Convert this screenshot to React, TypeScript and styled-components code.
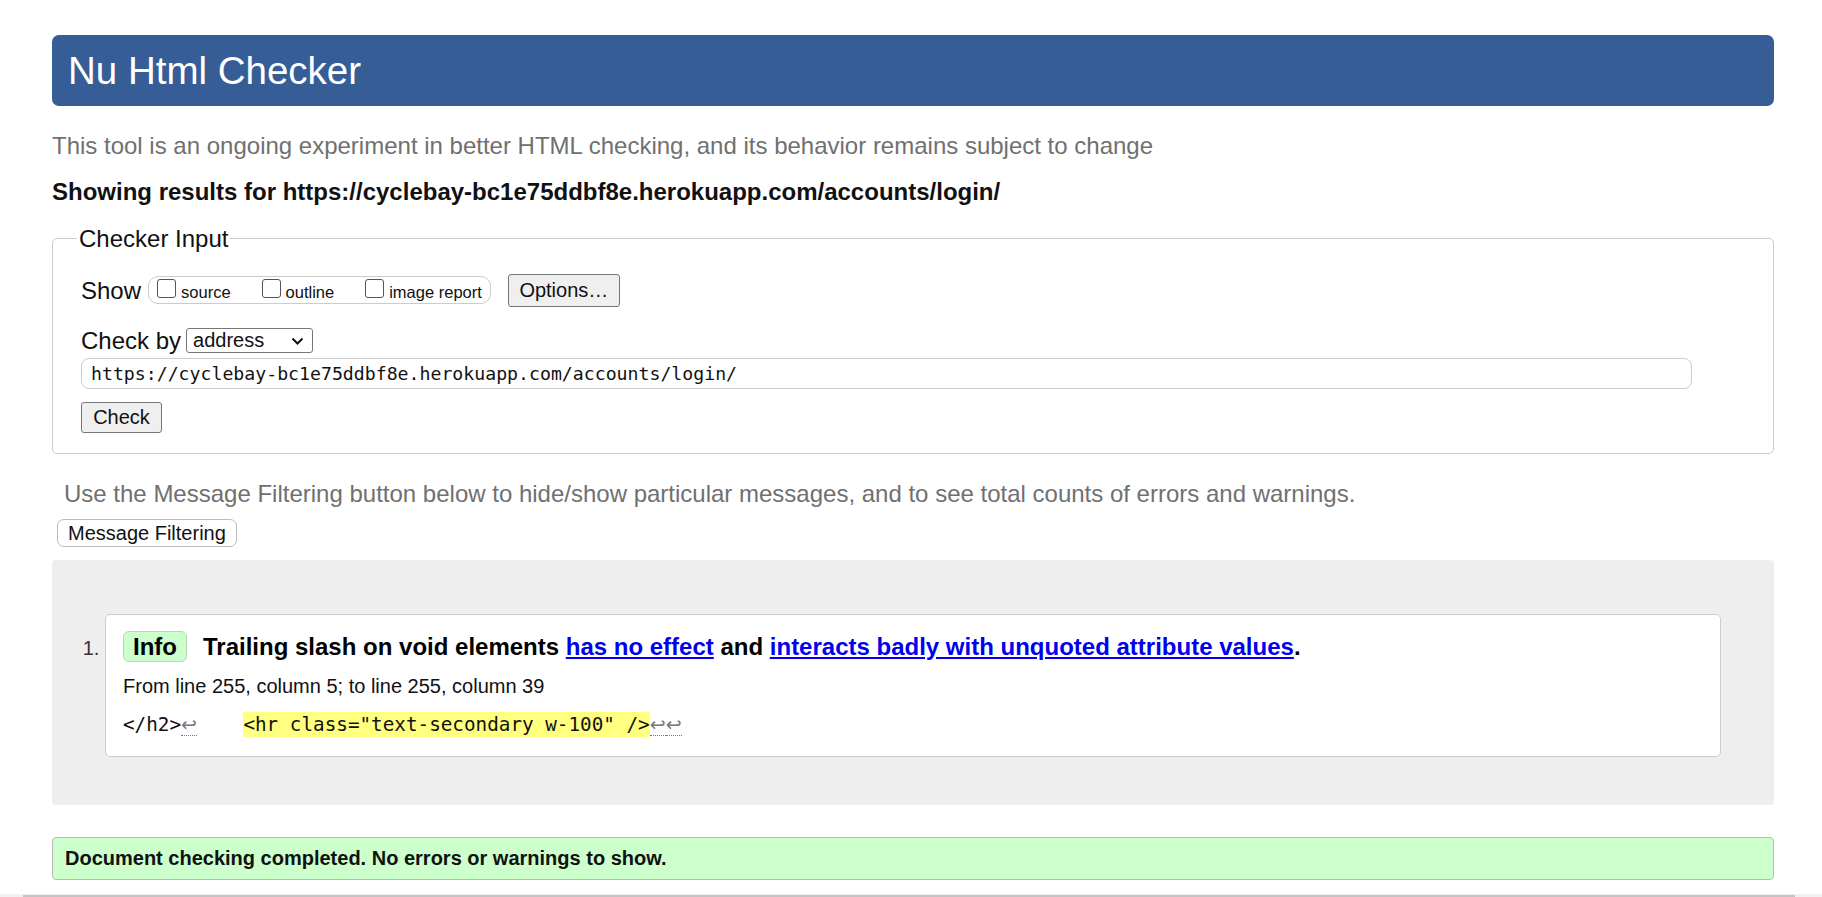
import React from 'react'
import styled, { createGlobalStyle } from 'styled-components'

const GlobalStyle = createGlobalStyle`
  html, body {
    margin: 0;
    padding: 0;
    overflow: hidden;
    background: #fff;
  }
  body {
    font-family: "Liberation Sans", Arial, sans-serif;
    color: #111;
  }
`

const checkedUrl = 'https://cyclebay-bc1e75ddbf8e.herokuapp.com/accounts/login/'

export default function App() {
  return (
    <>
      <GlobalStyle />
      <Page>
        <Header>Nu Html Checker</Header>
        <Intro>This tool is an ongoing experiment in better HTML checking, and its behavior remains subject to change</Intro>
        <ResultsFor>Showing results for {checkedUrl}</ResultsFor>

        <InputForm>
          <Legend>Checker Input</Legend>
          <ShowRow>
            <FieldLabel>Show</FieldLabel>
            <Pill>
              <CheckItem><Box /><CheckText>source</CheckText></CheckItem>
              <CheckItem><Box /><CheckText>outline</CheckText></CheckItem>
              <CheckItem><Box /><CheckText>image report</CheckText></CheckItem>
            </Pill>
            <Button $ml={17} $w={112} $h={33}>Options…</Button>
          </ShowRow>
          <CheckByRow>
            <FieldLabel>Check by</FieldLabel>
            <Select>
              <span>address</span>
              <svg width="13" height="8" viewBox="0 0 13 8">
                <path d="M1.5 1.5 L6.5 6.5 L11.5 1.5" fill="none" stroke="#111" strokeWidth="2" />
              </svg>
            </Select>
          </CheckByRow>
          <UrlInput>{checkedUrl}</UrlInput>
          <Button $mt={13} $w={81} $h={31}>Check</Button>
        </InputForm>

        <FilterHint>Use the Message Filtering button below to hide/show particular messages, and to see total counts of errors and warnings.</FilterHint>
        <FilterButton>Message Filtering</FilterButton>

        <Results>
          <MessageList>
            <Message>
              <MessageHead>
                <Badge>Info</Badge>
                <strong>
                  Trailing slash on void elements <Link>has no effect</Link> and{' '}
                  <Link>interacts badly with unquoted attribute values</Link>.
                </strong>
              </MessageHead>
              <Location>From line 255, column 5; to line 255, column 39</Location>
              <Extract>
                {'</h2>'}<Lf>↩</Lf>{'    '}<Mark>{'<hr class="text-secondary w-100" />'}</Mark><Lf>↩</Lf><Lf>↩</Lf>
              </Extract>
            </Message>
          </MessageList>
        </Results>

        <Done>Document checking completed. No errors or warnings to show.</Done>
      </Page>
      <ScrollTrack><ScrollThumb /></ScrollTrack>
    </>
  )
}

const Page = styled.div`
  width: 1722px;
  margin-left: 52px;
  padding-top: 35px;
`

const Header = styled.h1`
  margin: 0;
  height: 71px;
  padding: 0 16px;
  background: #365d95;
  color: #fff;
  font-size: 38.5px;
  font-weight: normal;
  line-height: 71px;
  border-radius: 7px;
`

const Intro = styled.p`
  margin: 26px 0 0;
  font-size: 24px;
  line-height: 27px;
  color: #707070;
`

const ResultsFor = styled.p`
  margin: 19px 0 0;
  font-size: 24px;
  line-height: 27px;
  font-weight: bold;
  color: #111;
`

const InputForm = styled.fieldset`
  margin: 20px 0 0;
  padding: 0 28px 20px;
  min-inline-size: 0;
  border: 1px solid #ccc;
  border-radius: 5px;
  display: flex;
  flex-direction: column;
  align-items: flex-start;
`

const Legend = styled.legend`
  margin-left: -4px;
  padding: 0 2px;
  font-size: 24px;
  line-height: 27px;
  color: #111;
`

const ShowRow = styled.div`
  display: flex;
  align-items: center;
  height: 34px;
  margin-top: 21px;
`

const CheckByRow = styled.div`
  display: flex;
  align-items: center;
  height: 27px;
  margin-top: 20px;
`

const FieldLabel = styled.span`
  font-size: 24px;
  line-height: 27px;
  color: #111;
`

const Pill = styled.div`
  display: flex;
  gap: 31px;
  height: 26px;
  margin-left: 7px;
  padding: 0 8px;
  border: 1px solid #ccc;
  border-radius: 10px;
`

const CheckItem = styled.label`
  display: flex;
  align-items: flex-start;
  gap: 5px;
`

const Box = styled.span`
  box-sizing: border-box;
  width: 19px;
  height: 19px;
  margin-top: 2px;
  border: 1px solid #555;
  border-radius: 3px;
  background: #fff;
`

const CheckText = styled.span`
  margin-top: 6px;
  font-size: 16.5px;
  line-height: 19px;
  color: #111;
`

const Button = styled.button<{ $ml?: number; $mt?: number; $w: number; $h: number }>`
  box-sizing: border-box;
  width: ${p => p.$w}px;
  height: ${p => p.$h}px;
  margin: ${p => p.$mt || 0}px 0 0 ${p => p.$ml || 0}px;
  padding: 0;
  background: #efefef;
  border: 1px solid #767676;
  border-radius: 3px;
  font-family: "Liberation Sans", Arial, sans-serif;
  font-size: 20px;
  color: #111;
`

const Select = styled.div`
  box-sizing: border-box;
  display: flex;
  align-items: center;
  justify-content: space-between;
  width: 127px;
  height: 25px;
  margin-left: 5px;
  padding: 0 8px 0 6px;
  border: 1px solid #767676;
  border-radius: 3px;
  font-size: 20px;
  color: #111;
`

const UrlInput = styled.div`
  box-sizing: border-box;
  width: 1611px;
  height: 31px;
  margin-top: 4px;
  padding-left: 9px;
  border: 1px solid #ccc;
  border-radius: 8px;
  font-family: "DejaVu Sans Mono", "Liberation Mono", monospace;
  font-size: 18.2px;
  line-height: 29px;
  color: #111;
`

const FilterHint = styled.p`
  margin: 26px 0 0;
  padding-left: 12px;
  font-size: 24px;
  line-height: 27px;
  color: #707070;
`

const FilterButton = styled.button`
  box-sizing: border-box;
  height: 28px;
  margin: 12px 0 0 5px;
  padding: 0 10px;
  background: #fff;
  border: 1px solid #bbb;
  border-radius: 7px;
  font-family: "Liberation Sans", Arial, sans-serif;
  font-size: 20px;
  color: #111;
`

const Results = styled.div`
  margin-top: 13px;
  padding: 54px 53px 48px;
  background: #eee;
  border-radius: 4px;
`

const MessageList = styled.ol`
  margin: 0;
  padding: 0;
  list-style: decimal outside;
`

const Message = styled.li`
  padding: 16px 17px 19px;
  background: #fff;
  border: 1px solid #ccc;
  border-radius: 5px;
  font-size: 20px;
  color: #222;

  &::marker {
    font-size: 20px;
    color: #333;
  }
`

const MessageHead = styled.p`
  margin: 0;
  font-size: 24px;
  line-height: 31px;
  color: #000;
`

const Badge = styled.span`
  display: inline-block;
  box-sizing: border-box;
  height: 31px;
  margin-right: 16px;
  padding: 0 9px;
  background: #cfc;
  border: 1px solid #b4d9b4;
  border-radius: 6px;
  font-weight: bold;
  line-height: 29px;
  vertical-align: baseline;
`

const Link = styled.a`
  color: #0000ee;
  text-decoration: underline;
  text-underline-offset: 2px;
`

const Location = styled.p`
  margin: 12px 0 0;
  font-size: 20px;
  line-height: 24px;
  color: #111;
`

const Extract = styled.p`
  margin: 14px 0 0;
  font-family: "DejaVu Sans Mono", "Liberation Mono", monospace;
  font-size: 19.3px;
  line-height: 24px;
  white-space: pre;
  color: #111;
`

const Lf = styled.span`
  font-family: "DejaVu Sans", sans-serif;
  font-size: 19px;
  color: #777;
  border-bottom: 1px dotted #777;
`

const Mark = styled.span`
  background: #ffff80;
  padding: 1px 0;
`

const Done = styled.div`
  margin-top: 32px;
  height: 43px;
  box-sizing: border-box;
  padding: 0 12px;
  background: #cfc;
  border: 1px solid #bbb;
  border-radius: 4px;
  font-size: 20px;
  font-weight: bold;
  line-height: 41px;
  color: #111;
`

const ScrollTrack = styled.div`
  position: fixed;
  left: 0;
  right: 0;
  bottom: 0;
  height: 3px;
  background: #f1f1f1;
`

const ScrollThumb = styled.div`
  margin: 1px 27px 0 23px;
  height: 2px;
  background: #c4c4c4;
`
